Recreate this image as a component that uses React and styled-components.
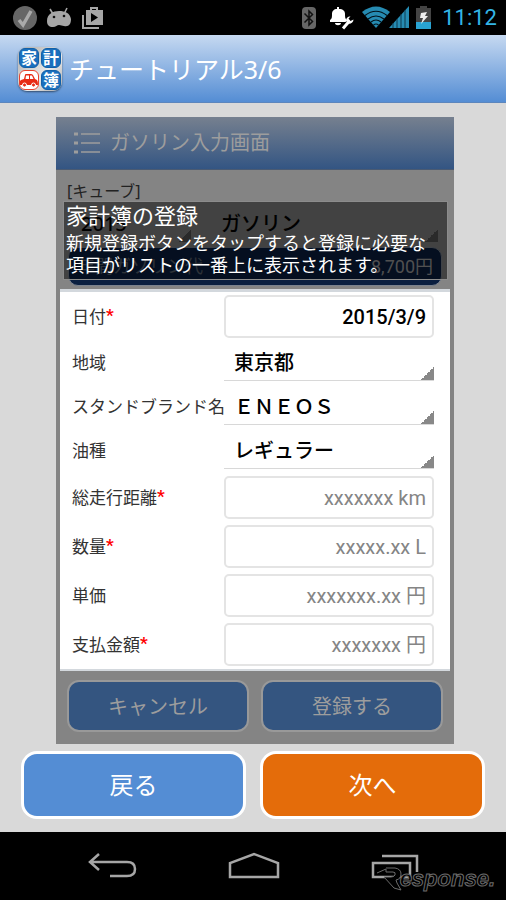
import React from "react";
import styled, { createGlobalStyle } from "styled-components";

const GlobalStyle = createGlobalStyle`
  *, *::before, *::after { box-sizing: border-box; }
  body { margin: 0; background: #d9d9d9; font-family: "Noto Sans", "Noto Sans CJK JP", sans-serif; }
  button, input, select { font-family: inherit; margin: 0; }
`;

const Screen = styled.div`
  display: flex;
  flex-direction: column;
  min-height: 100vh;
  background: #d9d9d9;
`;

const StatusBar = styled.div`
  display: flex;
  align-items: center;
  justify-content: space-between;
  height: 35px;
  padding: 0 9px 0 13px;
  background: #000;
`;

const IconGroup = styled.div`
  display: flex;
  align-items: center;
  gap: ${(p) => p.$gap}px;
`;

const Clock = styled.time`
  margin-left: 4px;
  color: #33b5e5;
  font: 400 22px/34px Roboto, sans-serif;
`;

const AppBar = styled.header`
  display: flex;
  align-items: center;
  gap: 7px;
  height: 68px;
  padding: 0 18px;
  background: linear-gradient(#c6d9f1, #548dd4);
  border-bottom: 1px solid #5c86bd;
`;

const AppTitle = styled.h1`
  margin: 0;
  color: #fff;
  font-size: 25px;
  font-weight: 400;
  line-height: 36px;
`;

const AppIcon = styled.div`
  display: grid;
  grid-template-columns: 20px 20px;
  gap: 2px;
  padding: 1px;
  border-radius: 9px;
  background: linear-gradient(135deg, #aaa, #e8e8e8 60%, #aaa);
  box-shadow: 0 1px 2px rgba(0, 0, 0, 0.5);
`;

const Tile = styled.span`
  display: flex;
  align-items: center;
  justify-content: center;
  height: 20px;
  border: 1px solid ${(p) => (p.$light ? "#e8432e" : "#1260a8")};
  border-radius: 6px;
  background: ${(p) => (p.$light ? "#fff" : "#1a6fbd")};
  color: #fff;
  font-size: 16px;
  font-weight: 700;
  line-height: 18px;
`;

const Main = styled.main`
  display: flex;
  flex: 1;
  flex-direction: column;
  padding-top: 14px;
`;

const Preview = styled.section`
  position: relative;
  margin: 0 52px 0 56px;
  padding-bottom: 12px;
  background: #848484;
`;

const PreviewBar = styled.div`
  display: flex;
  align-items: center;
  gap: 10px;
  height: 53px;
  padding: 0 18px;
  background: linear-gradient(#76808f, #335583);
  border-bottom: 1px solid #4a5a72;
`;

const PreviewTitle = styled.h2`
  margin: 0;
  color: #9d9d9d;
  font-size: 20px;
  font-weight: 400;
  line-height: 28px;
`;

const Vehicle = styled.p`
  margin: 0;
  padding: 9px 11px 0;
  color: #222;
  font-size: 16px;
  line-height: 24px;
`;

const FilterRow = styled.div`
  display: grid;
  grid-template-columns: 122px 1fr;
  gap: 18px;
  height: 40px;
  padding: 0 16px 0 13px;
`;

const Filter = styled.select`
  height: 39px;
  padding: 2px 12px 0;
  appearance: none;
  border: 0;
  border-radius: 0;
  background: linear-gradient(135deg, transparent 50%, #555 50%) no-repeat right bottom / 13px 13px;
  color: #000;
  font-size: 20px;
  font-weight: 500;
`;

const Total = styled.div`
  display: flex;
  align-items: center;
  justify-content: space-between;
  height: 39px;
  margin: 4px 12px 3px;
  padding: 0 8px;
  border: 1px solid #7a828e;
  border-radius: 10px;
  background: #0a1f40;
  color: #a0a0a0;
  font: 400 18px/26px Roboto, "Noto Sans CJK JP", sans-serif;
`;

const TotalName = styled.span`
  color: #5c6470;
`;

const Form = styled.form`
  margin: 0 4px;
  padding: 0 16px 0 12px;
  background: #fff;
  border: solid #d3d8dd;
  border-width: 3px 0 2px;
`;

const Row = styled.div`
  display: grid;
  grid-template-columns: 152px 1fr;
  align-items: center;
  height: ${(p) => (p.$select ? 44 : 49)}px;
`;

const Label = styled.label`
  color: #333;
  font-size: 17px;
  line-height: 24px;
  white-space: nowrap;
`;

const Required = styled.span`
  color: #f00;
  font-family: Roboto, sans-serif;
  font-weight: 700;
  line-height: 1;
  vertical-align: 2px;
`;

const Field = styled.input`
  width: 100%;
  min-width: 0;
  height: 43px;
  padding: 0 6px;
  border: 2px solid #e4e4e4;
  border-radius: 5px;
  background: #fff;
  color: #000;
  font: 500 20px Roboto, "Noto Sans CJK JP", sans-serif;
  text-align: right;
  &::placeholder { color: #858585; opacity: 1; font-weight: 400; }
`;

const Picker = styled.select`
  width: 100%;
  height: 36px;
  padding: 0 10px;
  appearance: none;
  border: 0;
  border-bottom: 1px solid #d8d8d8;
  border-radius: 0;
  background: linear-gradient(135deg, transparent 50%, #888 50%) no-repeat right bottom / 13px 13px;
  color: #000;
  font-size: 20px;
  font-weight: 500;
`;

const PreviewActions = styled.div`
  display: grid;
  grid-template-columns: 1fr 1fr;
  gap: 12px;
  padding: 9px 11px 0;
`;

const PreviewButton = styled.button`
  height: 52px;
  padding: 0 0 2px;
  border: 2px solid #999;
  border-radius: 12px;
  background: #345580;
  color: #9d9d9d;
  font-size: 20px;
`;

const Hint = styled.aside`
  position: absolute;
  top: 84px;
  right: 6px;
  left: 7px;
  height: 79px;
  padding: 0 2px;
  border: 1px solid #8c8c8c;
  background: rgba(0, 0, 0, 0.5);
  color: #fff;
  font-size: 18px;
  line-height: 22px;
  white-space: nowrap;
`;

const HintTitle = styled.h3`
  margin: 0;
  font-size: 22px;
  font-weight: 400;
  line-height: 26px;
`;

const HintText = styled.p`
  margin: 4px 0 0;
`;

const Actions = styled.div`
  display: grid;
  grid-template-columns: 1fr 1fr;
  gap: 14px;
  padding: 7px 21px 13px;
`;

const ActionButton = styled.button`
  height: 68px;
  padding: 0 0 4px;
  border: 3px solid #fff;
  border-radius: 16px;
  background: ${(p) => (p.$primary ? "#e46c0a" : "#548dd4")};
  color: #fff;
  font-size: 24px;
`;

const NavBar = styled.nav`
  position: relative;
  display: flex;
  align-items: center;
  justify-content: space-between;
  height: 68px;
  padding: 0 87px;
  background: #000;
`;

const NavButton = styled.button`
  display: flex;
  padding: 0;
  border: 0;
  background: none;
`;

const Watermark = styled.div`
  position: absolute;
  right: 11px;
  bottom: 8px;
  display: flex;
  align-items: flex-end;
`;

const WatermarkText = styled.span`
  margin-left: -2px;
  color: #000;
  font: italic 700 22px/26px "Liberation Sans", sans-serif;
  -webkit-text-stroke: 1px #6c6c6c;
`;

function StatusIconsLeft() {
  return (
    <IconGroup $gap={10}>
      <svg width="24" height="26" viewBox="0 0 24 26">
        <circle cx="12" cy="13" r="12" fill="#666" />
        <path d="M6 15l4 5 8-14" fill="none" stroke="#aaa" strokeWidth="3.5" />
      </svg>
      <svg width="24" height="26" viewBox="0 0 24 26">
        <path d="M3 4l3 5M20 3l-3 6" stroke="#a6a6a6" strokeWidth="1.6" />
        <path d="M0 16C0 9 6 6 12 6s11 2 12 8c0 5-2 8-7 7-2 0-3-1-5-1s-3 2-6 2c-4 0-6-2-6-6z" fill="#a6a6a6" />
        <circle cx="7" cy="12" r="1.3" fill="#111" />
        <circle cx="17" cy="11" r="1.3" fill="#111" />
      </svg>
      <svg width="24" height="26" viewBox="0 0 24 26">
        <path d="M2 10v13h16" fill="none" stroke="#a6a6a6" strokeWidth="2" />
        <path d="M10 6V3h6v4" fill="none" stroke="#a6a6a6" strokeWidth="2" />
        <path fillRule="evenodd" d="M5 5h17v15H5zM10 8v9l7-4.500z" fill="#a6a6a6" />
      </svg>
    </IconGroup>
  );
}

function StatusIconsRight() {
  return (
    <IconGroup $gap={7}>
      <IconGroup $gap={13}>
        <svg width="14" height="22" viewBox="0 0 14 22">
          <rect width="14" height="22" rx="4" fill="#666" />
          <path d="M2.500 6.500l8 8L7 18V4l3.500 3.500-8 8" fill="none" stroke="#111" strokeWidth="1.500" />
        </svg>
        <svg width="26" height="24" viewBox="0 0 26 24">
          <path d="M1 16v-2c2-1 2-3 2-6 0-3 2-5 5-5V1h2v2c4 0 6 2 6 5 0 3 0 5 2 6v2zM6 17h6c0 3-6 3-6 0z" fill="#fff" />
          <path d="M13 23l8-8" stroke="#000" strokeWidth="5" />
          <path d="M14 22.500l6-7" stroke="#fff" strokeWidth="3" />
          <path d="M17.500 15.500c-1-3 1-5 4-5l-2 2 2 2.500 3-1.500c0 3-3 5-6 4z" fill="#fff" />
        </svg>
      </IconGroup>
      <svg width="47" height="23" viewBox="0 0 47 23">
        <path d="M0 6Q14-5 28 6L14 22z" fill="#268bb2" />
        <path d="M3 9.500Q14 1 25 9.500M6 13q8-6 16 0M9 16q5-4 10 0M11.500 19q2.500-2 5 0" fill="none" stroke="#02121b" strokeWidth="1.200" />
        <path d="M27 22L47 0v22z" fill="#268bb2" />
        <path d="M31 17v5M35 13v9M39 8v14M43 4v18" stroke="#0d3a50" strokeWidth="1" />
      </svg>
      <svg width="15" height="23" viewBox="0 0 15 23">
        <path d="M4 0h7v2h4v14H0V2h4z" fill="#444" />
        <path d="M0 16h15v7H0z" fill="#29a3d2" />
        <path d="M5 7l6-1-2 4h3l-7 8 2-6H4z" fill="#eee" />
      </svg>
      <Clock>11:12</Clock>
    </IconGroup>
  );
}

function Car() {
  return (
    <svg width="18" height="16" viewBox="0 0 18 16">
      <path fillRule="evenodd" d="M1 8l3-1 1-4q0-1 1-1h5q1 0 2 1l2 4 2 1q1 1 1 5H0V9zM6 3.500L5.500 7H9V3.500zM10 3.500V7h3.500L12 3.500z" fill="#e82a14" />
      <circle cx="4.500" cy="13" r="2" fill="#e82a14" stroke="#fff" />
      <circle cx="13.500" cy="13" r="2" fill="#e82a14" stroke="#fff" />
    </svg>
  );
}

const fields = [
  { id: "date", label: "日付", required: true, value: "2015/3/9" },
  { id: "area", label: "地域", option: "東京都" },
  { id: "brand", label: "スタンドブランド名", option: "ＥＮＥＯＳ" },
  { id: "fuel", label: "油種", option: "レギュラー" },
  { id: "distance", label: "総走行距離", required: true, placeholder: "xxxxxxx km" },
  { id: "amount", label: "数量", required: true, placeholder: "xxxxx.xx L" },
  { id: "price", label: "単価", placeholder: "xxxxxxx.xx 円" },
  { id: "payment", label: "支払金額", required: true, placeholder: "xxxxxxx 円" },
];

function FormRow({ field }) {
  return (
    <Row $select={Boolean(field.option)}>
      <Label htmlFor={field.id}>
        {field.label}
        {field.required && <Required>*</Required>}
      </Label>
      {field.option ? (
        <Picker id={field.id}>
          <option>{field.option}</option>
        </Picker>
      ) : (
        <Field id={field.id} defaultValue={field.value} placeholder={field.placeholder} />
      )}
    </Row>
  );
}

export default function App() {
  return (
    <Screen>
      <GlobalStyle />
      <StatusBar>
        <StatusIconsLeft />
        <StatusIconsRight />
      </StatusBar>
      <AppBar>
        <AppIcon>
          <Tile>家</Tile>
          <Tile>計</Tile>
          <Tile $light><Car /></Tile>
          <Tile>簿</Tile>
        </AppIcon>
        <AppTitle>チュートリアル3/6</AppTitle>
      </AppBar>
      <Main>
        <Preview>
          <PreviewBar>
            <svg width="26" height="24" viewBox="0 0 26 24">
              <path d="M7 3h19M7 12h19M7 21h19" stroke="#9d9d9d" strokeWidth="1.500" />
              <path d="M0 3h4M0 12h4M0 21h4" stroke="#9d9d9d" strokeWidth="3" />
            </svg>
            <PreviewTitle>ガソリン入力画面</PreviewTitle>
          </PreviewBar>
          <Vehicle>[キューブ]</Vehicle>
          <FilterRow>
            <Filter aria-label="年"><option>2015</option></Filter>
            <Filter aria-label="費目"><option>ガソリン</option></Filter>
          </FilterRow>
          <Total>
            <TotalName>年間ガソリン代</TotalName>
            <span>8,700円</span>
          </Total>
          <Form>
            {fields.map((f) => <FormRow key={f.id} field={f} />)}
          </Form>
          <PreviewActions>
            <PreviewButton type="button">キャンセル</PreviewButton>
            <PreviewButton type="button">登録する</PreviewButton>
          </PreviewActions>
          <Hint>
            <HintTitle>家計簿の登録</HintTitle>
            <HintText>新規登録ボタンをタップすると登録に必要な<br />項目がリストの一番上に表示されます。</HintText>
          </Hint>
        </Preview>
        <Actions>
          <ActionButton type="button">戻る</ActionButton>
          <ActionButton type="button" $primary>次へ</ActionButton>
        </Actions>
      </Main>
      <NavBar>
        <NavButton aria-label="Back">
          <svg width="50" height="28" viewBox="0 0 50 28" fill="none" stroke="#a6a6a6" strokeWidth="2.500">
            <path d="M3 10h37q8 0 8 7t-8 7H23M12 2l-9 8 9 8" />
          </svg>
        </NavButton>
        <NavButton aria-label="Home">
          <svg width="52" height="28" viewBox="0 0 52 28" fill="none" stroke="#a6a6a6" strokeWidth="2.500">
            <path d="M2 25V11L26 2l24 9v14z" />
          </svg>
        </NavButton>
        <NavButton aria-label="Recent apps">
          <svg width="48" height="28" viewBox="0 0 48 28" fill="none" stroke="#a6a6a6" strokeWidth="2.500">
            <path d="M2 11h37v14H2zM11 4h35v16" />
          </svg>
        </NavButton>
        <Watermark>
          <svg width="26" height="26" viewBox="0 0 26 26">
            <path d="M1 7l9-4v3h7q3 0 2 3-1 2-4 2H8l10 11 7 2-4-7-1-3q5-1 5-6 0-5-6-6H10" fill="#000" stroke="#6c6c6c" strokeWidth="1" />
          </svg>
          <WatermarkText>esponse.</WatermarkText>
        </Watermark>
      </NavBar>
    </Screen>
  );
}
